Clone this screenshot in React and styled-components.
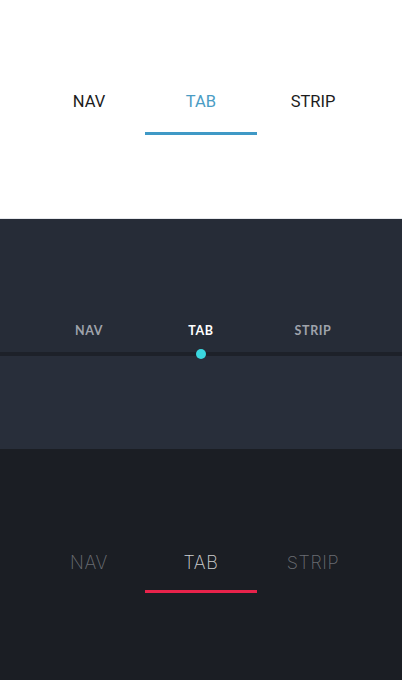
import React from "react";
import styled, { createGlobalStyle } from "styled-components";

const tabs = ["NAV", "TAB", "STRIP"];

const Global = createGlobalStyle`
  html, body {
    margin: 0;
    padding: 0;
    background: #1b1e24;
  }
  * { box-sizing: border-box; }
`;

const Page = styled.div`
  width: 402px;
  height: 680px;
  display: flex;
  flex-direction: column;
`;

const Section = styled.section`
  height: ${(p) => p.$h}px;
  background: ${(p) => p.$bg};
  display: flex;
  flex-direction: column;
`;

const Row = styled.div`
  display: grid;
  grid-template-columns: repeat(3, 112px);
  justify-content: center;
`;

/* --- light --- */
const LightSection = styled(Section)`
  padding-top: 91px;
  border-bottom: 1px solid #e6e8ec;
`;

const LightTab = styled.div`
  font-family: Roboto, "Liberation Sans", sans-serif;
  font-size: 16.5px;
  line-height: 22px;
  text-align: center;
  color: ${(p) => (p.$active ? "#4a9cc4" : "#1c1c1c")};
  padding-bottom: 19px;
  border-bottom: 3px solid ${(p) => (p.$active ? "#3f99c6" : "transparent")};
`;

/* --- mid --- */
const MidTop = styled.div`
  height: 133px;
  background: #262c37;
  padding-top: 104px;
`;

const MidTab = styled.div`
  font-family: Lato, "Open Sans", sans-serif;
  font-weight: 700;
  font-size: 12.5px;
  letter-spacing: 0.6px;
  line-height: 16px;
  text-align: center;
  color: ${(p) => (p.$active ? "#ffffff" : "#9fa3ab")};
`;

const Track = styled.div`
  position: relative;
  height: 4px;
  background: #1d2129;
`;

const Dot = styled.span`
  position: absolute;
  left: 196px;
  top: -3px;
  width: 10px;
  height: 10px;
  border-radius: 50%;
  background: #3ad7df;
`;

const MidBottom = styled.div`
  flex: 1;
  background: #282e3a;
`;

/* --- dark --- */
const DarkSection = styled(Section)`
  padding-top: 102px;
`;

const DarkTab = styled.div`
  font-family: Inter, "Lato", sans-serif;
  font-weight: 200;
  font-size: 18px;
  letter-spacing: 0.6px;
  line-height: 24px;
  text-align: center;
  color: ${(p) => (p.$active ? "#cfcfd1" : "#6a6d73")};
  padding-bottom: 15px;
  border-bottom: 3px solid ${(p) => (p.$active ? "#e8234b" : "transparent")};
`;

export default function App() {
  return (
    <Page>
      <Global />
      <LightSection $h={219} $bg="#ffffff">
        <Row>
          {tabs.map((t) => (
            <LightTab key={t} $active={t === "TAB"}>
              {t}
            </LightTab>
          ))}
        </Row>
      </LightSection>
      <Section $h={230} $bg="#262c37">
        <MidTop>
          <Row>
            {tabs.map((t) => (
              <MidTab key={t} $active={t === "TAB"}>
                {t}
              </MidTab>
            ))}
          </Row>
        </MidTop>
        <Track>
          <Dot />
        </Track>
        <MidBottom />
      </Section>
      <DarkSection $h={231} $bg="#1b1e24">
        <Row>
          {tabs.map((t) => (
            <DarkTab key={t} $active={t === "TAB"}>
              {t}
            </DarkTab>
          ))}
        </Row>
      </DarkSection>
    </Page>
  );
}
